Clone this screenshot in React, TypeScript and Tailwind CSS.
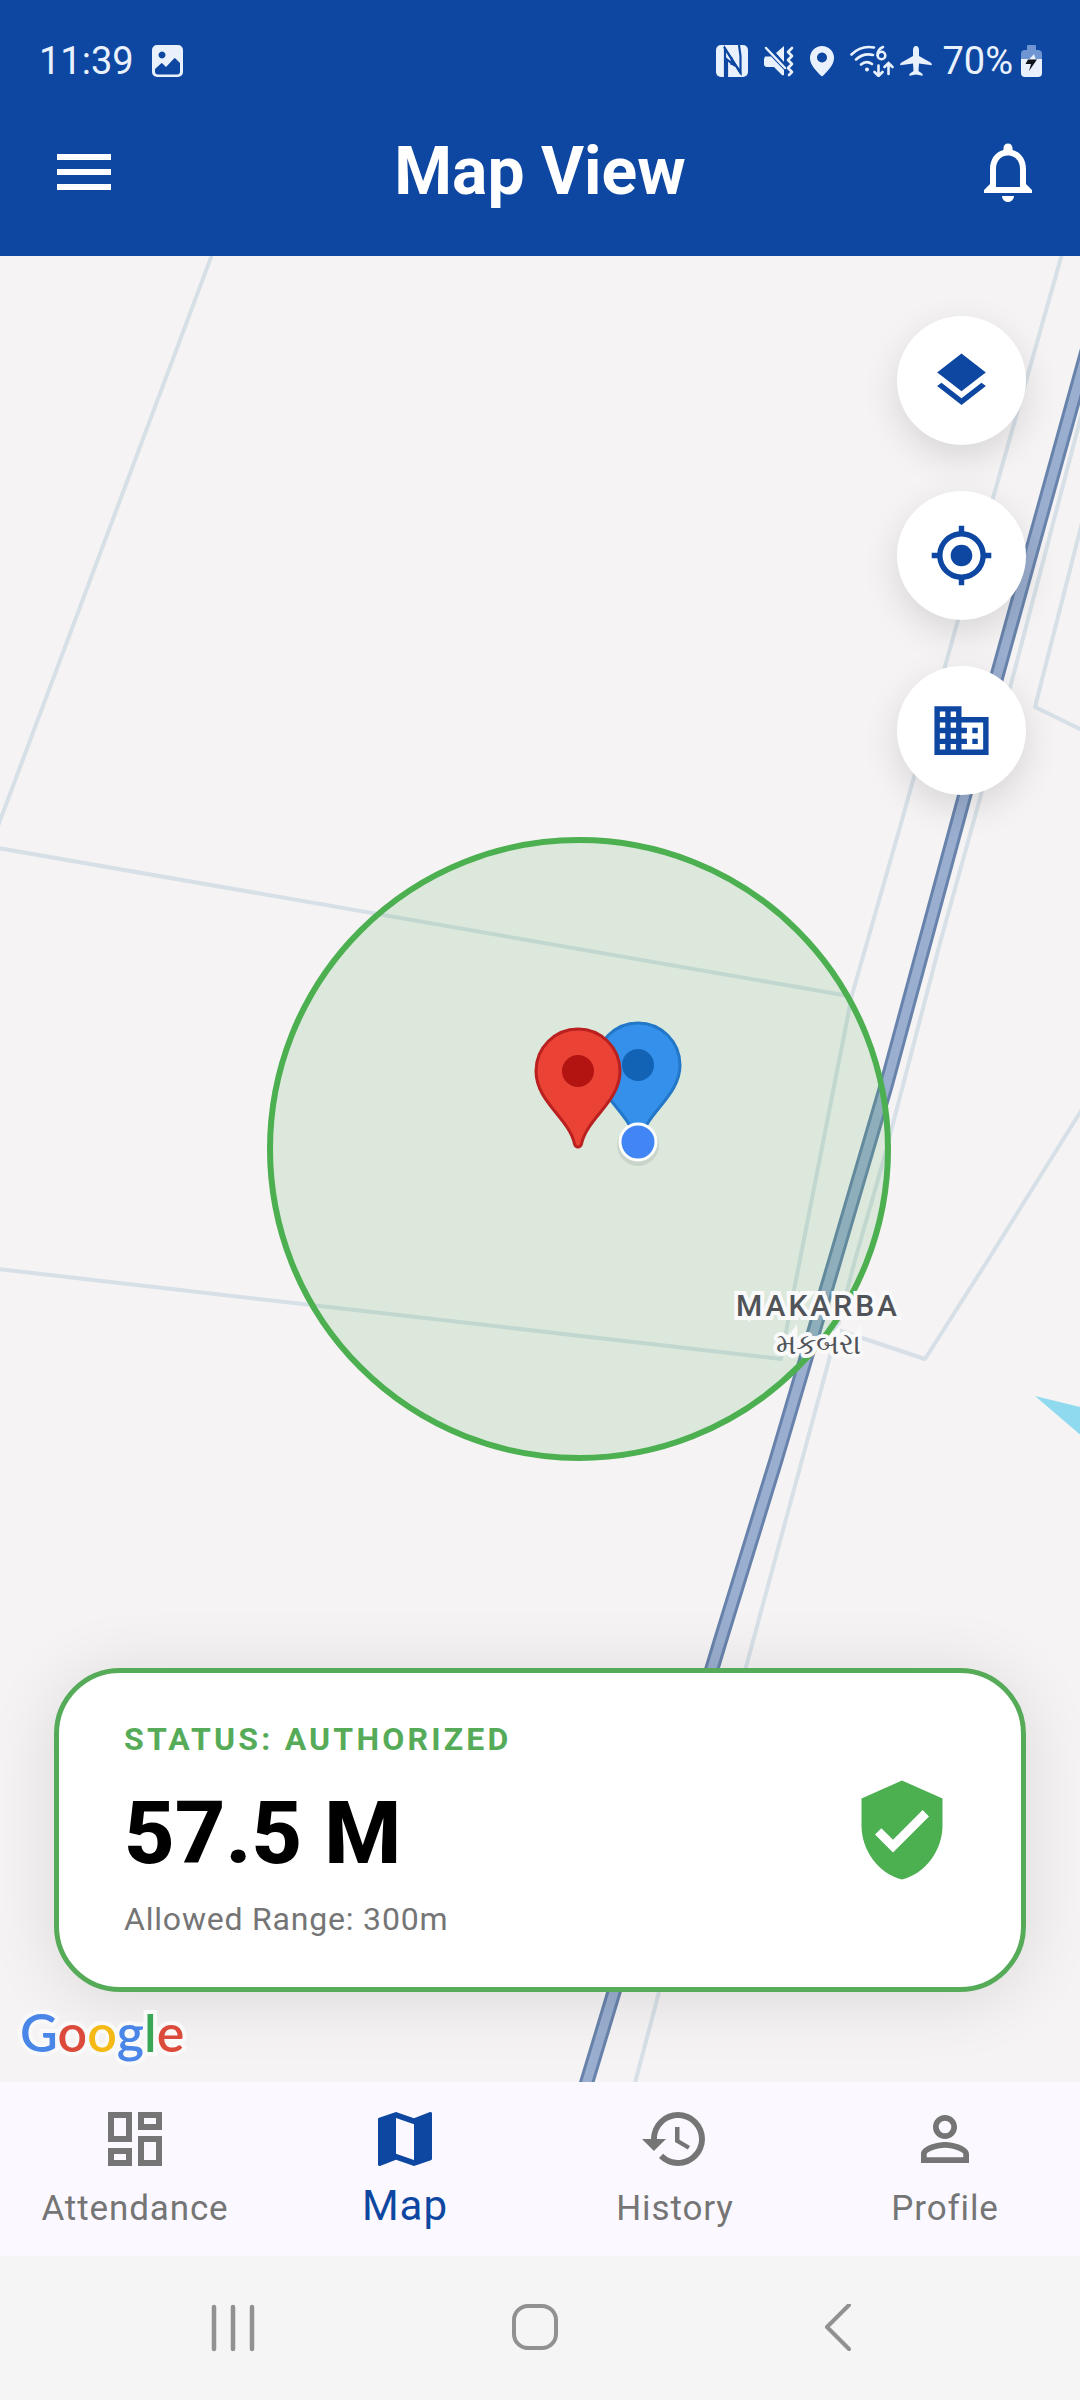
import { useState } from 'react';
import {
  MdBusiness,
  MdHistory,
  MdLayers,
  MdMap,
  MdMenu,
  MdMyLocation,
  MdNotificationsNone,
  MdOutlineDashboard,
  MdPersonOutline,
  MdVerifiedUser,
} from 'react-icons/md';

const tabs = [
  { name: 'Attendance', icon: MdOutlineDashboard },
  { name: 'Map', icon: MdMap },
  { name: 'History', icon: MdHistory },
  { name: 'Profile', icon: MdPersonOutline },
];

const mapControls = [
  { name: 'Layers', icon: MdLayers },
  { name: 'My location', icon: MdMyLocation },
  { name: 'Office', icon: MdBusiness },
];

const ROAD = '1110,268 1087,351 997,676 886,1086 835,1260 776,1460 720,1642 614,1992 582,2098';
const PIN = 'M0 76C-2 76-3 75-3.500 73C-9 47-42 31-42 0A42 42 0 0 1 42 0C42 31 9 47 3.500 73C3 75 2 76 0 76Z';

function StatusBar() {
  return (
    <div className="flex h-[88px] items-center justify-between pt-[34px] pl-[39px] pr-[38px] text-[38px] leading-[54px] text-[#e9f1fd]">
      <div className="flex items-center gap-[18px]">
        <span>11:39</span>
        {/* screenshot saved */}
        <svg width="31" height="32" viewBox="0 0 31 32">
          <path
            fill="currentColor"
            fillRule="evenodd"
            d="M5 0H26a5 5 0 0 1 5 5V27a5 5 0 0 1-5 5H5a5 5 0 0 1-5-5V5a5 5 0 0 1 5-5ZM10 6.500a3.500 3.500 0 1 0 .01 0ZM3 24v2.500a3 3 0 0 0 3 3H25a3 3 0 0 0 3-3V18l-4.500-4.500a1 1 0 0 0-1.500 0L14 22l-3.500-3.500a1 1 0 0 0-1.500 0Z"
          />
        </svg>
      </div>

      <div className="flex items-center">
        {/* nfc */}
        <svg width="32" height="32" viewBox="0 0 32 32">
          <rect width="32" height="32" rx="5" fill="currentColor" />
          <path d="M9 32V3.500L24.500 27.500V11L23 0M11 32V14.500L19 21" fill="none" stroke="#0d47a1" strokeWidth="2.200" />
          <path d="M8 2L25 29M15.500 12V20" fill="none" stroke="#0d47a1" strokeWidth="2" />
        </svg>
        {/* mute + vibrate */}
        <svg className="ml-4" width="30" height="32" viewBox="0 0 30 32">
          <path fill="currentColor" d="M1 11.500H7L20 25V30L18.500 30.500L10 22H3a3 3 0 0 1-3-3V14ZM12 8L20 1V17Z" />
          <path d="M2 3L21 23" fill="none" stroke="currentColor" strokeWidth="2.500" strokeLinecap="round" />
          <path d="M28 3l-4 4 4 4-4 4 4 4-4 4 4 4-3 3" fill="none" stroke="currentColor" strokeWidth="2.600" strokeLinecap="round" strokeLinejoin="round" />
        </svg>
        {/* location */}
        <svg className="ml-4" width="24" height="32" viewBox="0 0 24 32">
          <path
            fill="currentColor"
            fillRule="evenodd"
            d="M12 1a12 12 0 0 1 12 12c0 7-6 12.500-10.500 17.300a2 2 0 0 1-3 0C6 25.500 0 20 0 13A12 12 0 0 1 12 1ZM12 7.500a5 5 0 1 0 .01 0Z"
          />
        </svg>
        {/* wifi 6 with traffic arrows */}
        <svg className="ml-4" width="44" height="32" viewBox="0 0 44 32">
          <g fill="none" stroke="currentColor" strokeWidth="2.600" strokeLinecap="round">
            <path d="M1.500 9.500C8 3 16 1 24 2.500M6 14.500C11 10 17 8.500 23 10M11 19.500C14.500 16.500 18.500 16.500 22 19" />
            <path d="M33 2C29.500 3.500 27.500 6.500 27.500 10" />
            <circle cx="31.500" cy="10.500" r="3.800" />
            <path d="M28.500 20.500V30M24.500 27L28.500 31L32.500 27M38.500 29V18.500M34.500 22L38.500 18L42.500 22" />
          </g>
          <circle cx="17" cy="24.500" r="2" fill="currentColor" />
        </svg>
        {/* airplane mode */}
        <svg className="ml-1.5" width="32" height="32" viewBox="0 0 32 32">
          <path
            fill="currentColor"
            d="M16 1c2 0 3 2 3 4v6l11.500 6.500c1 .7 1.500 1.500 1.300 2.800L19 18.500 18.500 26l3.500 2.500c.8.700.8 1.300.6 2.200L16 29.500l-6.600 1.200c-.2-.9-.2-1.500.6-2.200l3.500-2.500L13 18.500.2 20.300c-.2-1.300.3-2.100 1.300-2.800L13 11V5c0-2 1-4 3-4Z"
          />
        </svg>
        <span className="ml-2.5">70%</span>
        {/* battery charging */}
        <svg className="ml-2" width="21" height="32" viewBox="0 0 21 32">
          <path fill="#6f96d3" d="M6 1a1 1 0 0 1 1-1h7a1 1 0 0 1 1 1v4h2a4 4 0 0 1 4 4v5H0V9a4 4 0 0 1 4-4h2Z" />
          <path fill="currentColor" d="M0 14H21V28a4 4 0 0 1-4 4H4a4 4 0 0 1-4-4Z" />
          <path fill="#e9f1fd" d="M13 9l-8 9h11Z" />
          <path fill="#10131a" d="M7 14.500h9L8 26l2-7H4.500Z" />
        </svg>
      </div>
    </div>
  );
}

function MapCanvas() {
  return (
    <svg className="absolute inset-0 h-full w-full" viewBox="0 256 1080 1826" preserveAspectRatio="xMidYMid slice">
      {/* plot boundaries */}
      <g fill="none" stroke="#d7dfe7" strokeWidth="4" strokeLinejoin="round">
        <path d="M213 252L-2 826" />
        <path d="M-2 848L849 996" />
        <path d="M-2 1269L781 1359L794 1290L852 995L902 820L958 620L993 498L1062 254" />
        <path d="M1090 382L1010 688L974 820L940 943L883 1162L855 1260L829 1360L802 1460L746 1667L659 1992L635 2083" />
        <path d="M1084 515L1035 707L1084 731" />
        <path d="M1084 1106L988 1260L925 1359L862 1338L832 1328" />
      </g>
      <path fill="#8fdaee" d="M1035 1396L1084 1408V1438Z" />

      {/* main road */}
      <polyline points={ROAD} fill="none" stroke="#6883ab" strokeWidth="15" />
      <polyline points={ROAD} fill="none" stroke="#9aaecf" strokeWidth="9" />

      {/* allowed area */}
      <circle cx="579" cy="1149" r="309" fill="#4caf50" fillOpacity="0.15" stroke="#4caf50" strokeWidth="6" />

      {/* user pin, office pin, live position */}
      <g transform="translate(638 1065)">
        <path d={PIN} fill="#3490ea" stroke="#2277c8" strokeWidth="3" />
        <circle r="16" fill="#1263b5" />
      </g>
      <g transform="translate(578 1071)">
        <path d={PIN} fill="#ea4335" stroke="#b9201f" strokeWidth="3" />
        <circle r="16" fill="#b31412" />
      </g>
      <circle cx="638" cy="1145" r="21" fill="#000" fillOpacity="0.08" />
      <circle cx="638" cy="1142" r="18" fill="#4285f4" stroke="#fff" strokeWidth="3" />
    </svg>
  );
}

export default function App() {
  const [active, setActive] = useState('Map');

  return (
    <div className="flex min-h-screen flex-col bg-[#f5f5f5] font-[Roboto,sans-serif] antialiased">
      {/* HEADER */}
      <header className="bg-[#0d47a1] text-white">
        <StatusBar />
        <div className="grid h-[168px] grid-cols-[1fr_auto_1fr] items-center px-9">
          <button aria-label="Menu" className="ml-3 justify-self-start">
            <MdMenu size={72} />
          </button>
          <h1 className="text-[66px] leading-[80px] font-bold">Map View</h1>
          <button aria-label="Notifications" className="justify-self-end">
            <MdNotificationsNone size={72} />
          </button>
        </div>
      </header>

      {/* MAP */}
      <main className="relative flex flex-1 flex-col justify-between overflow-hidden bg-[#f5f3f4] px-[54px] pt-[60px] pb-[90px]">
        <MapCanvas />

        <div className="absolute top-[1028px] left-[818px] flex -translate-x-1/2 flex-col items-center text-[#505459] [-webkit-text-stroke:8px_#f9f9fa] [paint-order:stroke_fill]">
          <span className="text-[30px] leading-[44px] font-medium tracking-widest">MAKARBA</span>
          <span className="text-[29px] leading-[32px]">મકબરા</span>
        </div>

        <div className="relative flex flex-col items-end gap-[46px]">
          {mapControls.map(({ name, icon: Icon }) => (
            <button
              key={name}
              aria-label={name}
              className="flex size-[129px] items-center justify-center rounded-full bg-white text-[#0d47a1] shadow-[0_12px_36px_rgba(0,0,0,0.12)]"
            >
              <Icon size={65} />
            </button>
          ))}
        </div>

        <section className="relative flex items-center justify-between rounded-[66px] border-5 border-[#56ab59] bg-white px-[65px] py-11 shadow-[0_6px_70px_rgba(0,0,0,0.11)]">
          <div>
            <p className="text-[32px] leading-[44px] font-bold tracking-widest text-[#56ab59]">STATUS: AUTHORIZED</p>
            <p className="pt-2 text-[88px] leading-[128px] font-extrabold text-black">57.5 M</p>
            <p className="pb-0.5 text-[32px] leading-[44px] tracking-wide text-[#757575]">Allowed Range: 300m</p>
          </div>
          <MdVerifiedUser size={108} className="text-[#4caf50]" />
        </section>

        <a
          href="#google"
          aria-label="Google"
          className="absolute bottom-4 left-[20px] font-[Lato,sans-serif] text-[52px] leading-[68px] font-semibold [-webkit-text-stroke:8px_#f9f9f9] [paint-order:stroke_fill]"
        >
          <span className="text-[#4a86e8]">G</span>
          <span className="text-[#dc4a3c]">o</span>
          <span className="text-[#f4b914]">o</span>
          <span className="text-[#4a86e8]">g</span>
          <span className="text-[#3aa757]">l</span>
          <span className="text-[#dc4a3c]">e</span>
        </a>
      </main>

      {/* TABS */}
      <nav className="grid h-[174px] grid-cols-4 bg-[#fbf9ff]">
        {tabs.map(({ name, icon: Icon }) => (
          <button
            key={name}
            onClick={() => setActive(name)}
            className={`flex flex-col items-center justify-between pt-[21px] pb-5 tracking-wide ${
              active === name ? 'text-[42px] leading-[60px] text-[#0d47a1]' : 'text-[35px] leading-[54px] text-[#757575]'
            }`}
          >
            <Icon size={72} />
            <span>{name}</span>
          </button>
        ))}
      </nav>

      {/* SYSTEM NAVIGATION */}
      <div className="flex h-36 items-center justify-between pr-[218px] pl-[209px] text-[#919191]">
        <button aria-label="Recents">
          <svg width="48" height="48" viewBox="0 0 48 48" fill="none" stroke="currentColor" strokeWidth="4.500" strokeLinecap="round">
            <path d="M5 3V45M24 3V45M43 3V45" />
          </svg>
        </button>
        <button aria-label="Home">
          <svg width="48" height="48" viewBox="0 0 48 48" fill="none" stroke="currentColor" strokeWidth="4">
            <rect x="2" y="2" width="42" height="42" rx="14" />
          </svg>
        </button>
        <button aria-label="Back">
          <svg width="48" height="48" viewBox="0 0 48 48" fill="none" stroke="currentColor" strokeWidth="4" strokeLinecap="round" strokeLinejoin="round">
            <path d="M35 1L13 23L35 45" />
          </svg>
        </button>
      </div>
    </div>
  );
}
